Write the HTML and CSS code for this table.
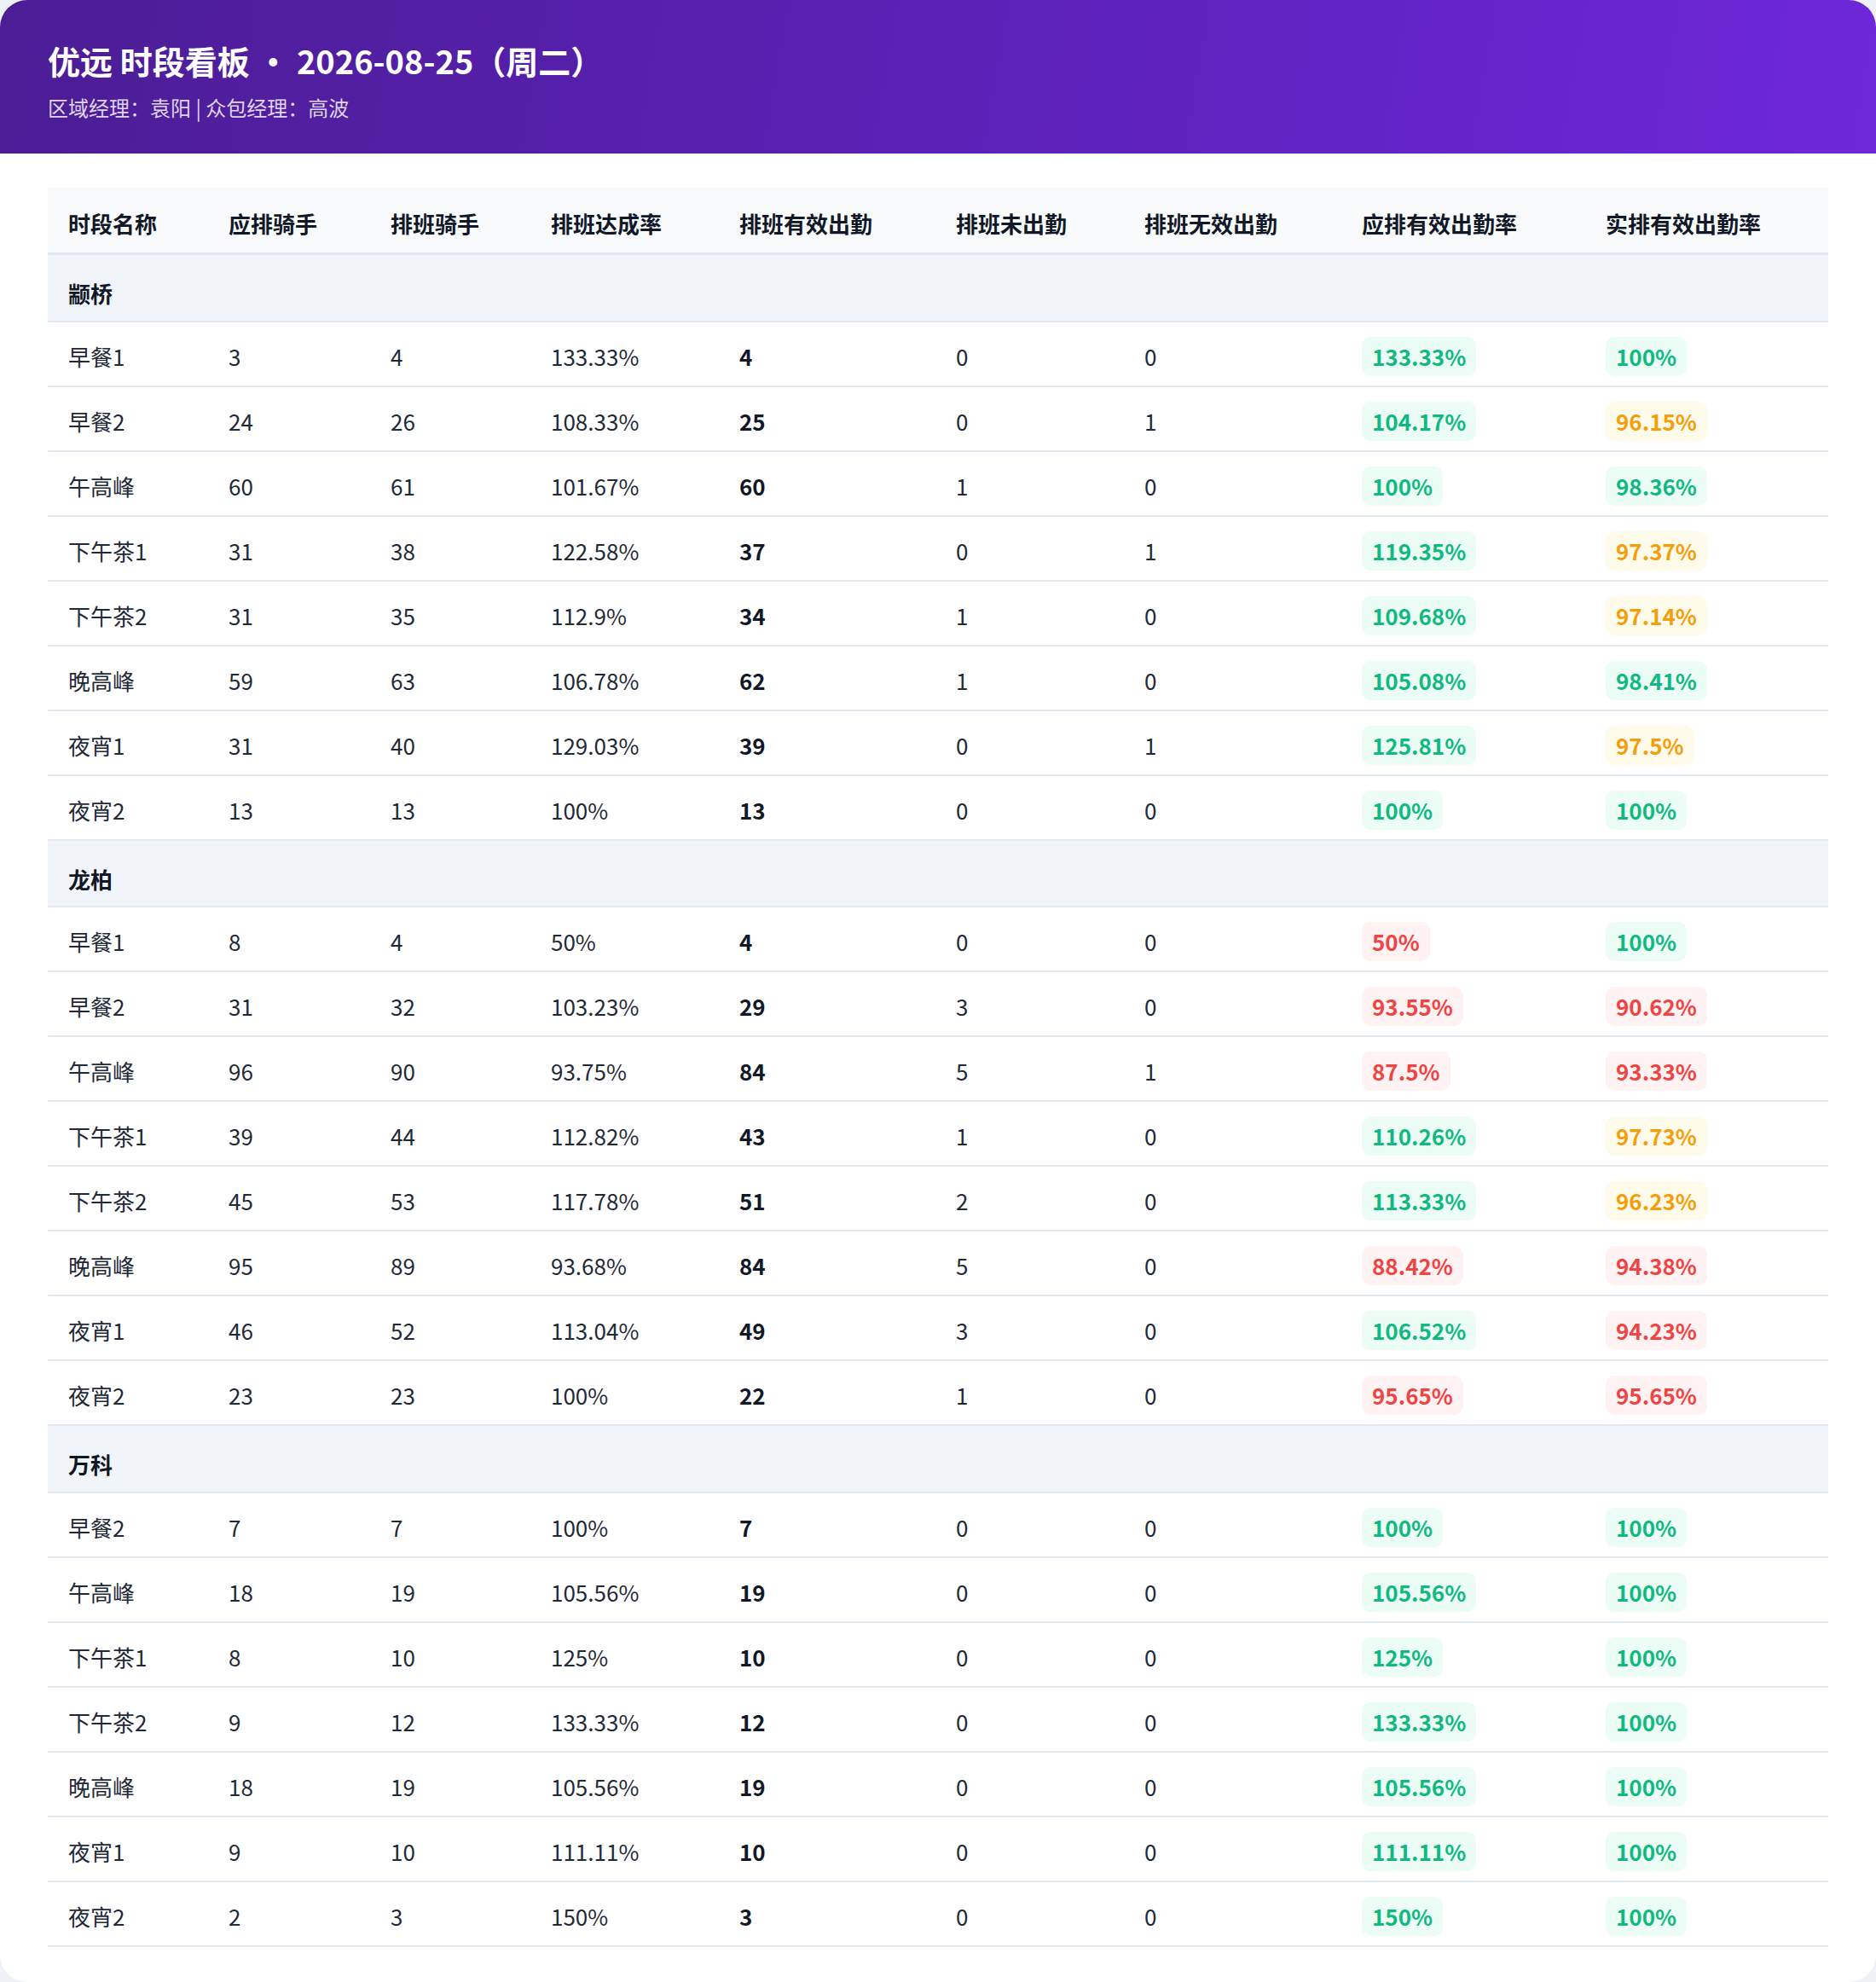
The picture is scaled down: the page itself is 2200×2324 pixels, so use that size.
FILE: index.html
```html
<!DOCTYPE html>
<html lang="zh-CN">
<head>
<meta charset="utf-8">
<title>优远 时段看板</title>
<link rel="stylesheet" href="styles.css">
</head>
<body>
<div class="board">
  <header class="head">
    <h1 class="title">优远 时段看板 · 2026-08-25（周二）</h1>
    <p class="sub">区域经理：袁阳 | 众包经理：高波</p>
  </header>
  <main class="content">
    <div class="sheet" role="table">
      <div class="row row-head" role="row">
        <div>时段名称</div><div>应排骑手</div><div>排班骑手</div><div>排班达成率</div><div>排班有效出勤</div><div>排班未出勤</div><div>排班无效出勤</div><div>应排有效出勤率</div><div>实排有效出勤率</div>
      </div>

      <div class="row row-group" role="row"><div>颛桥</div></div>
      <div class="row row-data" role="row"><div>早餐1</div><div>3</div><div>4</div><div>133.33%</div><div class="strong">4</div><div>0</div><div>0</div><div><span class="tag good">133.33%</span></div><div><span class="tag good">100%</span></div></div>
      <div class="row row-data" role="row"><div>早餐2</div><div>24</div><div>26</div><div>108.33%</div><div class="strong">25</div><div>0</div><div>1</div><div><span class="tag good">104.17%</span></div><div><span class="tag warn">96.15%</span></div></div>
      <div class="row row-data" role="row"><div>午高峰</div><div>60</div><div>61</div><div>101.67%</div><div class="strong">60</div><div>1</div><div>0</div><div><span class="tag good">100%</span></div><div><span class="tag good">98.36%</span></div></div>
      <div class="row row-data" role="row"><div>下午茶1</div><div>31</div><div>38</div><div>122.58%</div><div class="strong">37</div><div>0</div><div>1</div><div><span class="tag good">119.35%</span></div><div><span class="tag warn">97.37%</span></div></div>
      <div class="row row-data" role="row"><div>下午茶2</div><div>31</div><div>35</div><div>112.9%</div><div class="strong">34</div><div>1</div><div>0</div><div><span class="tag good">109.68%</span></div><div><span class="tag warn">97.14%</span></div></div>
      <div class="row row-data" role="row"><div>晚高峰</div><div>59</div><div>63</div><div>106.78%</div><div class="strong">62</div><div>1</div><div>0</div><div><span class="tag good">105.08%</span></div><div><span class="tag good">98.41%</span></div></div>
      <div class="row row-data" role="row"><div>夜宵1</div><div>31</div><div>40</div><div>129.03%</div><div class="strong">39</div><div>0</div><div>1</div><div><span class="tag good">125.81%</span></div><div><span class="tag warn">97.5%</span></div></div>
      <div class="row row-data" role="row"><div>夜宵2</div><div>13</div><div>13</div><div>100%</div><div class="strong">13</div><div>0</div><div>0</div><div><span class="tag good">100%</span></div><div><span class="tag good">100%</span></div></div>

      <div class="row row-group" role="row"><div>龙柏</div></div>
      <div class="row row-data" role="row"><div>早餐1</div><div>8</div><div>4</div><div>50%</div><div class="strong">4</div><div>0</div><div>0</div><div><span class="tag bad">50%</span></div><div><span class="tag good">100%</span></div></div>
      <div class="row row-data" role="row"><div>早餐2</div><div>31</div><div>32</div><div>103.23%</div><div class="strong">29</div><div>3</div><div>0</div><div><span class="tag bad">93.55%</span></div><div><span class="tag bad">90.62%</span></div></div>
      <div class="row row-data" role="row"><div>午高峰</div><div>96</div><div>90</div><div>93.75%</div><div class="strong">84</div><div>5</div><div>1</div><div><span class="tag bad">87.5%</span></div><div><span class="tag bad">93.33%</span></div></div>
      <div class="row row-data" role="row"><div>下午茶1</div><div>39</div><div>44</div><div>112.82%</div><div class="strong">43</div><div>1</div><div>0</div><div><span class="tag good">110.26%</span></div><div><span class="tag warn">97.73%</span></div></div>
      <div class="row row-data" role="row"><div>下午茶2</div><div>45</div><div>53</div><div>117.78%</div><div class="strong">51</div><div>2</div><div>0</div><div><span class="tag good">113.33%</span></div><div><span class="tag warn">96.23%</span></div></div>
      <div class="row row-data" role="row"><div>晚高峰</div><div>95</div><div>89</div><div>93.68%</div><div class="strong">84</div><div>5</div><div>0</div><div><span class="tag bad">88.42%</span></div><div><span class="tag bad">94.38%</span></div></div>
      <div class="row row-data" role="row"><div>夜宵1</div><div>46</div><div>52</div><div>113.04%</div><div class="strong">49</div><div>3</div><div>0</div><div><span class="tag good">106.52%</span></div><div><span class="tag bad">94.23%</span></div></div>
      <div class="row row-data" role="row"><div>夜宵2</div><div>23</div><div>23</div><div>100%</div><div class="strong">22</div><div>1</div><div>0</div><div><span class="tag bad">95.65%</span></div><div><span class="tag bad">95.65%</span></div></div>

      <div class="row row-group" role="row"><div>万科</div></div>
      <div class="row row-data" role="row"><div>早餐2</div><div>7</div><div>7</div><div>100%</div><div class="strong">7</div><div>0</div><div>0</div><div><span class="tag good">100%</span></div><div><span class="tag good">100%</span></div></div>
      <div class="row row-data" role="row"><div>午高峰</div><div>18</div><div>19</div><div>105.56%</div><div class="strong">19</div><div>0</div><div>0</div><div><span class="tag good">105.56%</span></div><div><span class="tag good">100%</span></div></div>
      <div class="row row-data" role="row"><div>下午茶1</div><div>8</div><div>10</div><div>125%</div><div class="strong">10</div><div>0</div><div>0</div><div><span class="tag good">125%</span></div><div><span class="tag good">100%</span></div></div>
      <div class="row row-data" role="row"><div>下午茶2</div><div>9</div><div>12</div><div>133.33%</div><div class="strong">12</div><div>0</div><div>0</div><div><span class="tag good">133.33%</span></div><div><span class="tag good">100%</span></div></div>
      <div class="row row-data" role="row"><div>晚高峰</div><div>18</div><div>19</div><div>105.56%</div><div class="strong">19</div><div>0</div><div>0</div><div><span class="tag good">105.56%</span></div><div><span class="tag good">100%</span></div></div>
      <div class="row row-data" role="row"><div>夜宵1</div><div>9</div><div>10</div><div>111.11%</div><div class="strong">10</div><div>0</div><div>0</div><div><span class="tag good">111.11%</span></div><div><span class="tag good">100%</span></div></div>
      <div class="row row-data" role="row"><div>夜宵2</div><div>2</div><div>3</div><div>150%</div><div class="strong">3</div><div>0</div><div>0</div><div><span class="tag good">150%</span></div><div><span class="tag good">100%</span></div></div>
    </div>
  </main>
</div>
</body>
</html>
```

FILE: styles.css
```css
html, body {
  margin: 0;
  padding: 0;
}

body {
  background: #eef1f6;
  font-family: "Noto Sans CJK SC", "Noto Sans", "Liberation Sans", sans-serif;
  color: #1f2937;
}

.board {
  width: 2200px;
  min-height: 2324px;
  box-sizing: border-box;
  background: #ffffff;
  border-radius: 32px;
  overflow: hidden;
}

.head {
  height: 180px;
  box-sizing: border-box;
  padding: 46px 56px 36px;
  background: linear-gradient(100deg, #4c1d95 0%, #5b21b6 50%, #6d28d9 100%);
}

.title {
  margin: 0;
  font-size: 38px;
  line-height: 50px;
  font-weight: 700;
  color: #ffffff;
}

.sub {
  margin: 12px 0 0;
  font-size: 24px;
  line-height: 36px;
  color: rgba(255, 255, 255, 0.82);
}

.content {
  padding: 40px 56px 40px;
}

.sheet {
  display: flex;
  flex-direction: column;
}

.row {
  display: grid;
  grid-template-columns: 188px 190px 188px 221px 254px 221px 255px 286px 1fr;
  align-items: center;
  box-sizing: border-box;
  border-bottom: 2px solid #e2e8f0;
}

.row > div {
  padding: 0 24px;
  font-size: 26px;
  line-height: 38px;
  white-space: nowrap;
}

.row-head {
  height: 79px;
  padding-top: 7px;
  background: #f8fafc;
  border-bottom-width: 3px;
  font-weight: 700;
  color: #111827;
}

.row-group {
  height: 78.5px;
  padding-top: 14px;
  background: #f1f5f9;
  font-weight: 700;
  color: #111827;
}

.row-group > div {
  grid-column: 1 / -1;
}

.row-data {
  height: 76px;
  padding-top: 6px;
  color: #1f2937;
}

.strong {
  font-weight: 700;
  color: #111827;
}

.tag {
  display: inline-block;
  padding: 4px 12px;
  border-radius: 10px;
  font-weight: 700;
  line-height: 38px;
}

.good {
  color: #10b981;
  background: #ecfdf5;
}

.warn {
  color: #f59e0b;
  background: #fffbeb;
}

.bad {
  color: #ef4444;
  background: #fef2f2;
}
```
